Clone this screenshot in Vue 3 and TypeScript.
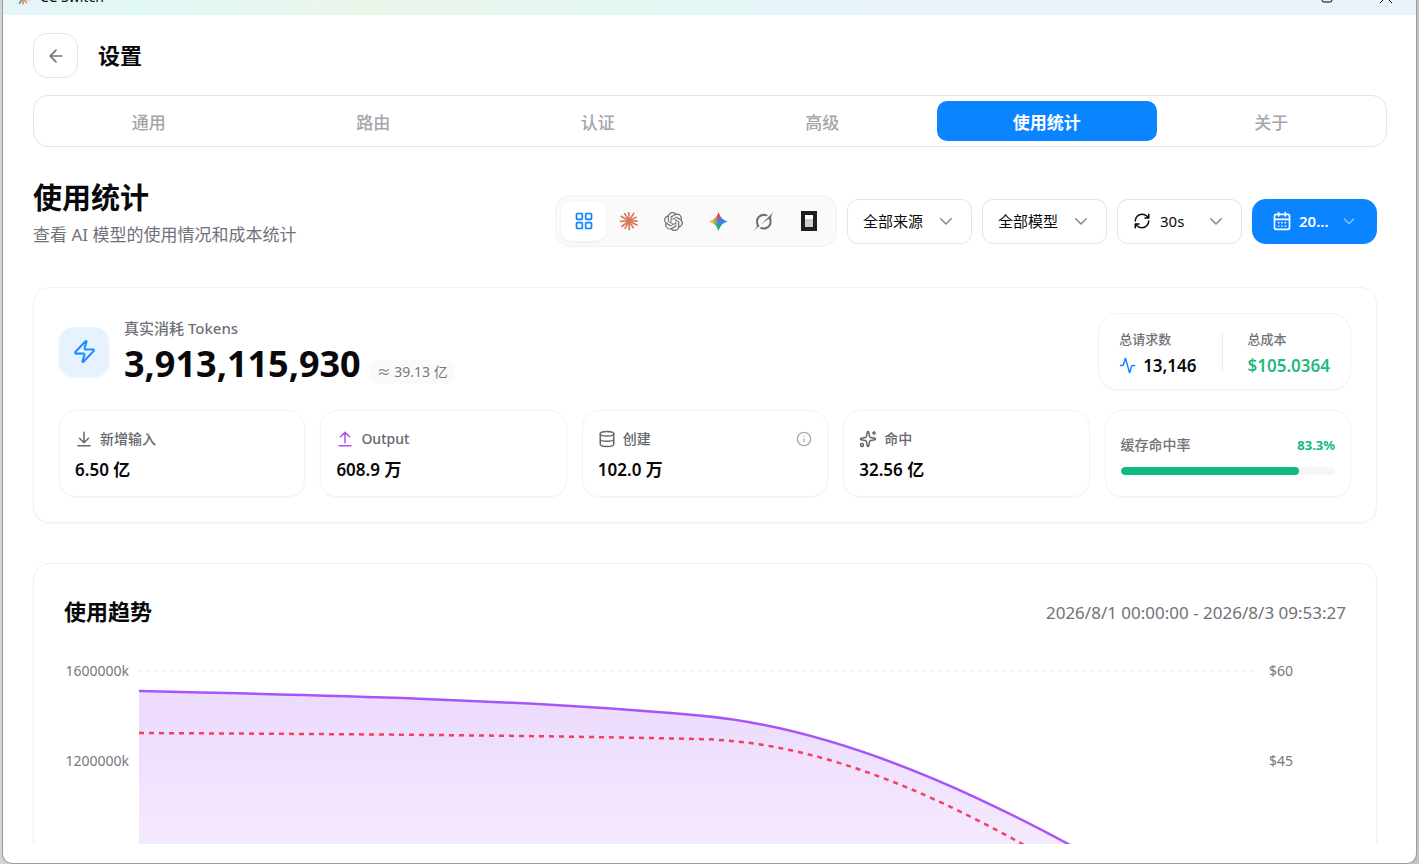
<script setup lang="ts">
import { computed, ref } from 'vue'

interface Point {
  x: number
  y: number
}

const tabs = ['通用', '路由', '认证', '高级', '使用统计', '关于']
const activeTab = ref('使用统计')

const providers = [
  { id: 'all', name: '全部' },
  { id: 'claude', name: 'Claude' },
  { id: 'openai', name: 'OpenAI' },
  { id: 'gemini', name: 'Gemini' },
  { id: 'grok', name: 'Grok' },
  { id: 'opencode', name: 'OpenCode' },
]
const activeProvider = ref('all')

const claudeRays = [
  [0, 9.6], [27, 10.4], [58, 9.4], [88, 10], [118, 9.6], [143, 10.4],
  [178, 10], [211, 10.6], [240, 10], [268, 9.8], [302, 10.4], [332, 9.6],
].map(([deg, len]) => {
  const a = (deg * Math.PI) / 180
  return { x: 12 + Math.cos(a) * len * 1.1, y: 12 + Math.sin(a) * len * 1.1 }
})

const metrics = [
  { id: 'input', label: '新增输入', value: '6.50 亿', info: false },
  { id: 'output', label: 'Output', value: '608.9 万', info: false },
  { id: 'create', label: '创建', value: '102.0 万', info: true },
  { id: 'hit', label: '命中', value: '32.56 亿', info: false },
]
const hitRate = 83.3

const tokenAxis = ['1600000k', '1200000k']
const costAxis = ['$60', '$45']

const tokenSeries: Point[] = [
  { x: 0, y: 20 },
  { x: 560, y: 44.5 },
  { x: 1120, y: 282.5 },
]
const costSeries: Point[] = [
  { x: 0, y: 62 },
  { x: 560, y: 68 },
  { x: 1120, y: 323 },
]

/** Monotone cubic curve through three points. */
function curve([a, b, c]: Point[]): string {
  const s0 = (b.y - a.y) / (b.x - a.x)
  const s1 = (c.y - b.y) / (c.x - b.x)
  const mid = 2 * Math.min(s0, s1, (s0 + s1) / 4)
  const start = (3 * s0 - mid) / 2
  const end = (3 * s1 - mid) / 2
  const d0 = (b.x - a.x) / 3
  const d1 = (c.x - b.x) / 3
  return (
    `M${a.x} ${a.y}` +
    `C${a.x + d0} ${a.y + d0 * start} ${b.x - d0} ${b.y - d0 * mid} ${b.x} ${b.y}` +
    `C${b.x + d1} ${b.y + d1 * mid} ${c.x - d1} ${c.y - d1 * end} ${c.x} ${c.y}`
  )
}

const tokenLine = computed(() => curve(tokenSeries))
const costLine = computed(() => curve(costSeries))
const tokenArea = computed(() => `${tokenLine.value}L1120 360L0 360Z`)
</script>

<template>
  <div class="desktop">
    <div class="window">
      <div class="titlebar">
        <svg class="app-icon" viewBox="0 0 24 24" aria-hidden="true">
          <g stroke-width="3" stroke-linecap="round">
            <path d="M12 12 3 14M12 12 6 21" stroke="#5b9bb0" />
            <path d="M12 12v10M12 12l6 8M12 12l10 3" stroke="#e8935a" />
            <path d="M12 12 3 7M12 12 12 2M12 12l9-5" stroke="#e8935a" />
          </g>
        </svg>
        <span class="app-name">CC Switch</span>
        <svg class="win-icon" viewBox="0 0 12 12" aria-hidden="true"><rect x="1" y="1" width="10" height="10" rx="2" /></svg>
        <svg class="win-icon close" viewBox="0 0 12 12" aria-hidden="true"><path d="M0 0l12 12M12 0 0 12" /></svg>
      </div>

      <header class="header">
        <button class="back" type="button" aria-label="返回">
          <svg class="icon" viewBox="0 0 24 24"><path d="m12 19-7-7 7-7M19 12H5" /></svg>
        </button>
        <h1>设置</h1>
      </header>

      <nav class="tabs">
        <button
          v-for="tab in tabs"
          :key="tab"
          type="button"
          :class="['tab', { active: tab === activeTab }]"
          @click="activeTab = tab"
        >{{ tab }}</button>
      </nav>

      <main class="content">
        <section class="intro">
          <div class="intro-text">
            <h2>使用统计</h2>
            <p>查看 AI 模型的使用情况和成本统计</p>
          </div>
          <div class="controls">
            <div class="segmented">
              <button
                v-for="p in providers"
                :key="p.id"
                type="button"
                :class="['segment', { active: p.id === activeProvider }]"
                :aria-label="p.name"
                @click="activeProvider = p.id"
              >
                <svg v-if="p.id === 'all'" class="icon blue" viewBox="0 0 24 24">
                  <rect x="3" y="3" width="7" height="7" rx="1" /><rect x="14" y="3" width="7" height="7" rx="1" />
                  <rect x="14" y="14" width="7" height="7" rx="1" /><rect x="3" y="14" width="7" height="7" rx="1" />
                </svg>
                <svg v-else-if="p.id === 'claude'" class="brand" viewBox="0 0 24 24">
                  <path v-for="(r, i) in claudeRays" :key="i" :d="`M12 12L${r.x} ${r.y}`" stroke="#d97757" stroke-width="2" />
                  <circle cx="12" cy="12" r="3" fill="#d97757" />
                </svg>
                <svg v-else-if="p.id === 'openai'" class="brand small gray" viewBox="0 0 24 24">
                  <path d="M22.2819 9.8211a5.9847 5.9847 0 0 0-.5157-4.9108 6.0462 6.0462 0 0 0-6.5098-2.9A6.0651 6.0651 0 0 0 4.9807 4.1818a5.9847 5.9847 0 0 0-3.9977 2.9 6.0462 6.0462 0 0 0 .7427 7.0966 5.98 5.98 0 0 0 .511 4.9107 6.051 6.051 0 0 0 6.5146 2.9001A5.9847 5.9847 0 0 0 13.2599 24a6.0557 6.0557 0 0 0 5.7718-4.2058 5.9894 5.9894 0 0 0 3.9977-2.9001 6.0557 6.0557 0 0 0-.7475-7.0729zm-9.022 12.6081a4.4755 4.4755 0 0 1-2.8764-1.0408l.1419-.0804 4.7783-2.7582a.7948.7948 0 0 0 .3927-.6813v-6.7369l2.02 1.1686a.071.071 0 0 1 .038.052v5.5826a4.504 4.504 0 0 1-4.4945 4.4944zm-9.6607-4.1254a4.4708 4.4708 0 0 1-.5346-3.0137l.142.0852 4.783 2.7582a.7712.7712 0 0 0 .7806 0l5.8428-3.3685v2.3324a.0804.0804 0 0 1-.0332.0615L9.74 19.9502a4.4992 4.4992 0 0 1-6.1408-1.6464zM2.3408 7.8956a4.485 4.485 0 0 1 2.3655-1.9728V11.6a.7664.7664 0 0 0 .3879.6765l5.8144 3.3543-2.0201 1.1685a.0757.0757 0 0 1-.071 0l-4.8303-2.7865A4.504 4.504 0 0 1 2.3408 7.872zm16.5963 3.8558L13.1038 8.364 15.1192 7.2a.0757.0757 0 0 1 .071 0l4.8303 2.7913a4.4944 4.4944 0 0 1-.6765 8.1042v-5.6772a.79.79 0 0 0-.407-.667zm2.0107-3.0231l-.142-.0852-4.7735-2.7818a.7759.7759 0 0 0-.7854 0L9.409 9.2297V6.8974a.0662.0662 0 0 1 .0284-.0615l4.8303-2.7866a4.4992 4.4992 0 0 1 6.6802 4.66zM8.3065 12.863l-2.02-1.1638a.0804.0804 0 0 1-.038-.0567V6.0742a4.4992 4.4992 0 0 1 7.3757-3.4537l-.142.0805L8.704 5.459a.7948.7948 0 0 0-.3927.6813zm1.0976-2.3654l2.602-1.4998 2.6069 1.4998v2.9994l-2.5974 1.4997-2.6067-1.4997Z" />
                </svg>
                <svg v-else-if="p.id === 'gemini'" class="brand small" viewBox="0 0 24 24">
                  <defs>
                    <linearGradient id="gem-top" x1="0" y1="0" x2="0" y2="1"><stop offset="0.25" stop-color="#f0453c" /><stop offset="0.48" stop-color="#f0453c" stop-opacity="0" /></linearGradient>
                    <linearGradient id="gem-left" x1="0" y1="0" x2="1" y2="0"><stop offset="0.2" stop-color="#f9bd10" /><stop offset="0.5" stop-color="#f9bd10" stop-opacity="0" /></linearGradient>
                    <linearGradient id="gem-bottom" x1="0" y1="1" x2="0" y2="0"><stop offset="0.22" stop-color="#08b962" /><stop offset="0.48" stop-color="#08b962" stop-opacity="0" /></linearGradient>
                  </defs>
                  <path v-for="f in ['#3186ff', 'url(#gem-bottom)', 'url(#gem-top)', 'url(#gem-left)']" :key="f" :fill="f" d="M12 0c1.500 6.300 5.700 10.500 12 12-6.300 1.500-10.500 5.700-12 12-1.500-6.300-5.700-10.500-12-12 6.300-1.500 10.500-5.700 12-12z" />
                </svg>
                <svg v-else-if="p.id === 'grok'" class="brand large gray" viewBox="0 0 24 24">
                  <path d="M9.27 15.29l7.978-5.897c.391-.29.95-.177 1.137.272.98 2.369.542 5.215-1.41 7.169-1.951 1.954-4.667 2.382-7.149 1.406l-2.711 1.257c3.889 2.661 8.611 2.003 11.562-.953 2.341-2.344 3.066-5.539 2.388-8.42l.006.007c-.983-4.232.242-5.924 2.75-9.383.06-.082.12-.164.179-.248l-3.301 3.305v-.01L9.267 15.292M7.623 16.723c-2.792-2.67-2.31-6.801.071-9.184 1.761-1.763 4.647-2.483 7.166-1.425l2.705-1.25a7.808 7.808 0 00-1.829-1A8.975 8.975 0 005.984 5.83c-2.533 2.536-3.33 6.436-1.962 9.764 1.022 2.487-.653 4.246-2.34 6.022-.599.63-1.199 1.259-1.682 1.925l7.62-6.815" />
                </svg>
                <svg v-else class="brand" viewBox="0 0 20 20">
                  <path fill="#211e1e" d="M2 0h16v20H2z" /><path fill="#fff" d="M6 4h8v4H6z" /><path fill="#cfcecd" d="M6 8h8v8H6z" />
                </svg>
              </button>
            </div>

            <label class="picker">
              <select aria-label="来源"><option>全部来源</option></select>
              <svg class="icon chevron" viewBox="0 0 24 24"><path d="m5 9 7 7 7-7" /></svg>
            </label>
            <label class="picker">
              <select aria-label="模型"><option>全部模型</option></select>
              <svg class="icon chevron" viewBox="0 0 24 24"><path d="m5 9 7 7 7-7" /></svg>
            </label>
            <label class="picker">
              <svg class="icon refresh" viewBox="0 0 24 24">
                <path d="M3 12a9 9 0 0 1 9-9 9.750 9.750 0 0 1 6.740 2.740L21 8M21 3v5h-5M21 12a9 9 0 0 1-9 9 9.750 9.750 0 0 1-6.740-2.740L3 16M8 16H3v5" />
              </svg>
              <select aria-label="刷新间隔"><option>30s</option></select>
              <svg class="icon chevron" viewBox="0 0 24 24"><path d="m5 9 7 7 7-7" /></svg>
            </label>
            <button class="date-button" type="button">
              <svg class="icon calendar" viewBox="0 0 24 24">
                <path d="M8 2v4M16 2v4M3 10h18M8 14h.01M12 14h.01M16 14h.01M8 18h.01M12 18h.01M16 18h.01" />
                <rect x="3" y="4" width="18" height="18" rx="2" />
              </svg>
              <span>20...</span>
              <svg class="icon chevron" viewBox="0 0 24 24"><path d="m5 9 7 7 7-7" /></svg>
            </button>
          </div>
        </section>

        <section class="card summary">
          <div class="summary-top">
            <div class="bolt">
              <svg class="icon" viewBox="0 0 24 24">
                <path d="M4 14a1 1 0 0 1-.78-1.630l9.900-10.200a.5.5 0 0 1 .860.460l-1.920 6.020A1 1 0 0 0 13 10h7a1 1 0 0 1 .780 1.630l-9.900 10.200a.5.5 0 0 1-.860-.460l1.920-6.020A1 1 0 0 0 11 14z" />
              </svg>
            </div>
            <div class="total">
              <div class="total-label">真实消耗 Tokens</div>
              <div class="total-line">
                <strong>3,913,115,930</strong>
                <span class="approx">≈ 39.13 亿</span>
              </div>
            </div>
            <div class="totals-box">
              <div class="totals-item">
                <span class="totals-label">总请求数</span>
                <span class="totals-value">
                  <svg class="icon blue" viewBox="0 0 24 24">
                    <path d="M22 12h-2.480a2 2 0 0 0-1.930 1.460l-2.350 8.360a.250.250 0 0 1-.480 0L9.240 2.180a.250.250 0 0 0-.480 0l-2.350 8.360A2 2 0 0 1 4.490 12H2" />
                  </svg>
                  13,146
                </span>
              </div>
              <div class="totals-item">
                <span class="totals-label">总成本</span>
                <span class="totals-value green">$105.0364</span>
              </div>
            </div>
          </div>

          <div class="metrics">
            <div v-for="m in metrics" :key="m.id" class="metric">
              <div class="metric-head">
                <svg v-if="m.id === 'input'" class="icon" viewBox="0 0 24 24"><path d="M12 17V3M6 11l6 6 6-6M20 21H4" /></svg>
                <svg v-else-if="m.id === 'output'" class="icon purple" viewBox="0 0 24 24"><path d="m18 9-6-6-6 6M12 3v14M4 21h16" /></svg>
                <svg v-else-if="m.id === 'create'" class="icon" viewBox="0 0 24 24">
                  <ellipse cx="12" cy="5" rx="9" ry="3" /><path d="M3 5v14a9 3 0 0 0 18 0V5M3 12a9 3 0 0 0 18 0" />
                </svg>
                <svg v-else class="icon" viewBox="0 0 24 24">
                  <path d="M11.017 2.814a1 1 0 0 1 1.966 0l1.051 5.558a2 2 0 0 0 1.594 1.594l5.558 1.051a1 1 0 0 1 0 1.966l-5.558 1.051a2 2 0 0 0-1.594 1.594l-1.051 5.558a1 1 0 0 1-1.966 0l-1.051-5.558a2 2 0 0 0-1.594-1.594l-5.558-1.051a1 1 0 0 1 0-1.966l5.558-1.051a2 2 0 0 0 1.594-1.594zM20 2v4M22 4h-4" />
                  <circle cx="4" cy="20" r="2" />
                </svg>
                <span>{{ m.label }}</span>
                <svg v-if="m.info" class="icon info" viewBox="0 0 24 24"><circle cx="12" cy="12" r="10" /><path d="M12 16v-4M12 8h.01" /></svg>
              </div>
              <div class="metric-value">{{ m.value }}</div>
            </div>
            <div class="metric rate">
              <div class="rate-head">
                <span>缓存命中率</span>
                <strong>{{ hitRate }}%</strong>
              </div>
              <div class="rate-track" role="progressbar" aria-label="缓存命中率" :aria-valuenow="hitRate">
                <div class="rate-fill" :style="{ width: hitRate + '%' }"></div>
              </div>
            </div>
          </div>
        </section>

        <section class="card trend">
          <div class="trend-head">
            <h3>使用趋势</h3>
            <span>2026/8/1 00:00:00 - 2026/8/3 09:53:27</span>
          </div>
          <div class="chart">
            <ul class="axis left"><li v-for="t in tokenAxis" :key="t">{{ t }}</li></ul>
            <svg class="plot" viewBox="0 0 1120 360" preserveAspectRatio="none" role="img" aria-label="使用趋势">
              <defs>
                <linearGradient id="token-fill" x1="0" y1="0" x2="0" y2="1">
                  <stop offset="0.05" stop-color="#a855f7" stop-opacity="0.21" />
                  <stop offset="0.95" stop-color="#a855f7" stop-opacity="0.02" />
                </linearGradient>
              </defs>
              <line class="grid" x1="0" x2="1120" y1="0" y2="0" />
              <path :d="tokenArea" fill="url(#token-fill)" />
              <path :d="tokenLine" class="line tokens" />
              <path :d="costLine" class="line cost" />
            </svg>
            <ul class="axis right"><li v-for="c in costAxis" :key="c">{{ c }}</li></ul>
          </div>
        </section>
      </main>
    </div>
  </div>
</template>

<style>
body {
  overflow: hidden;
}
</style>

<style scoped>
* {
  box-sizing: border-box;
}

h1,
h2,
h3,
p,
ul {
  margin: 0;
  padding: 0;
}

button,
select {
  font: inherit;
  color: inherit;
  cursor: pointer;
}

.desktop {
  height: 100vh;
  padding: 0 2px 0 2px;
  background: linear-gradient(90deg, #d4d4d4 50%, #c4c4c4 50%);
  font-family: "Noto Sans", "Noto Sans CJK SC", sans-serif;
  color: #09090b;
}

.window {
  display: flex;
  flex-direction: column;
  height: 100%;
  padding-bottom: 19px;
  overflow: hidden;
  background: #fff;
  border: 1px solid #9b9b9b;
  border-top: 0;
  border-radius: 0 0 10px 10px;
}

.icon {
  flex: none;
  width: 16px;
  height: 16px;
  fill: none;
  stroke: currentColor;
  stroke-width: 2;
  stroke-linecap: round;
  stroke-linejoin: round;
}

.blue {
  color: #0a84ff;
}

.purple {
  color: #a855f7;
}

.titlebar {
  flex: none;
  display: flex;
  align-items: flex-end;
  height: 15px;
  padding: 0 24px 10px 13px;
  overflow: hidden;
  background: linear-gradient(90deg, #e6f5f8, #e0f8f6 9%, #ebf6ea 26%, #e2f7f4 48%, #e7f4fa 58%, #ebf3f8 85%);
}

.app-icon {
  flex: none;
  width: 14px;
  height: 14px;
  margin-right: 10px;
}

.app-name {
  flex: 1;
  font-size: 14px;
  line-height: 16px;
}

.win-icon {
  flex: none;
  width: 12px;
  height: 12px;
  margin-right: 47px;
  margin-bottom: 2px;
  fill: none;
  stroke: #000;
  stroke-width: 1;
}

.win-icon.close {
  margin-right: 0;
}

.header {
  flex: none;
  display: flex;
  align-items: center;
  gap: 20px;
  padding: 18px 30px 17px;
}

.back {
  display: grid;
  place-items: center;
  width: 45px;
  height: 45px;
  color: #71717a;
  background: #fff;
  border: 1px solid #e4e4e7;
  border-radius: 14px;
}

.back .icon {
  width: 20px;
  height: 20px;
}

h1,
h3 {
  padding-bottom: 2px;
  font-size: 22px;
  line-height: 34px;
  font-weight: 600;
}

.tabs {
  flex: none;
  display: grid;
  grid-template-columns: repeat(6, 1fr);
  gap: 5px;
  margin: 0 29px 0 30px;
  padding: 5px;
  border: 1px solid #e4e4e7;
  border-radius: 15px;
}

.tab {
  height: 40px;
  padding: 0;
  font-size: 17px;
  font-weight: 500;
  color: #a5a5aa;
  background: none;
  border: 0;
  border-radius: 10px;
}

.tab.active {
  font-weight: 600;
  color: #fff;
  background: #0a84ff;
}

.content {
  flex: 1;
  min-height: 0;
  display: flex;
  flex-direction: column;
  gap: 40px;
  padding: 33px 39px 0 30px;
  overflow: hidden;
}

.intro {
  flex: none;
  display: flex;
  align-items: flex-end;
  justify-content: space-between;
}

.intro-text {
  display: flex;
  flex-direction: column;
  gap: 7px;
}

h2 {
  font-size: 29px;
  line-height: 36px;
  font-weight: 700;
}

.intro-text p {
  font-size: 17px;
  line-height: 24px;
  color: #71717a;
}

.controls {
  display: flex;
  align-items: center;
  gap: 10px;
}

.segmented {
  display: flex;
  padding: 5px;
  background: #fafafa;
  border: 1px solid #f1f1f2;
  border-radius: 15px;
}

.segment {
  display: grid;
  place-items: center;
  width: 45px;
  height: 40px;
  padding: 0;
  background: none;
  border: 0;
  border-radius: 11px;
}

.segment.active {
  background: #fff;
  box-shadow: 0 1px 3px rgba(0, 0, 0, 0.06);
}

.segment .icon,
.brand {
  width: 20px;
  height: 20px;
}

.brand {
  fill: none;
}

.brand.small {
  width: 19px;
  height: 19px;
}

.brand.large {
  width: 21px;
  height: 21px;
}

.brand.gray {
  fill: #71717a;
}

.picker {
  display: flex;
  align-items: center;
  width: 125px;
  height: 45px;
  padding: 0 16px 0 15px;
  font-size: 15px;
  background: #fff;
  border: 1px solid #e4e4e7;
  border-radius: 11px;
}

.picker select {
  flex: 1;
  min-width: 0;
  padding: 0;
  background: none;
  border: 0;
  appearance: none;
  outline: 0;
}

.chevron {
  width: 18px;
  height: 18px;
  stroke-width: 2;
  color: #85858a;
}

.refresh {
  width: 18px;
  height: 18px;
  margin-right: 9px;
}

.date-button {
  display: flex;
  align-items: center;
  width: 125px;
  height: 45px;
  padding: 0 20px;
  font-size: 15px;
  font-weight: 600;
  color: #fff;
  background: #0a84ff;
  border: 0;
  border-radius: 14px;
}

.date-button span {
  flex: 1;
  text-align: left;
  padding-left: 7px;
}

.calendar {
  width: 20px;
  height: 20px;
}

.date-button .chevron {
  width: 16px;
  height: 16px;
  color: #8fc6ff;
}

.card {
  flex: none;
  border: 1px solid #f0f0f1;
  border-radius: 17px;
  box-shadow: 0 1px 2px rgba(0, 0, 0, 0.04);
}

.summary {
  display: flex;
  flex-direction: column;
  gap: 20px;
  padding: 25px;
}

.summary-top {
  display: flex;
  align-items: center;
}

.bolt {
  display: grid;
  place-items: center;
  width: 50px;
  height: 50px;
  margin-right: 15px;
  color: #1a8cff;
  background: #e7f2ff;
  border-radius: 15px;
  box-shadow: 0 1px 2px rgba(0, 0, 0, 0.05);
}

.bolt .icon {
  width: 25px;
  height: 25px;
}

.total {
  flex: 1;
  display: flex;
  flex-direction: column;
  gap: 2px;
}

.total-label {
  font-size: 15px;
  line-height: 22px;
  font-weight: 500;
  color: #71717a;
}

.total-line {
  display: flex;
  align-items: flex-end;
  gap: 9px;
}

.total-line strong {
  font-size: 36px;
  line-height: 46px;
  font-weight: 700;
}

.approx {
  margin-bottom: 3px;
  padding: 0 7px;
  font-size: 14px;
  line-height: 24px;
  color: #77777d;
  background: #fafafa;
  border-radius: 9px;
}

.totals-box {
  display: flex;
  padding: 15px 20px 12px;
  border: 1px solid #f3f3f4;
  border-radius: 20px;
  box-shadow: 0 1px 2px rgba(0, 0, 0, 0.04);
}

.totals-item {
  display: flex;
  flex-direction: column;
  gap: 5px;
}

.totals-item + .totals-item {
  position: relative;
  margin-left: 25px;
  padding-left: 26px;
}

.totals-item + .totals-item::before {
  content: "";
  position: absolute;
  left: 0;
  top: 3px;
  bottom: 5px;
  width: 1px;
  background: #ececee;
}

.totals-label {
  font-size: 13px;
  line-height: 20px;
  font-weight: 500;
  color: #71717a;
}

.totals-value {
  display: flex;
  align-items: center;
  gap: 7px;
  font-size: 17px;
  line-height: 23px;
  font-weight: 600;
}

.totals-value .icon {
  width: 17px;
  height: 17px;
}

.green {
  color: #1fb980;
}

.metrics {
  display: grid;
  grid-template-columns: repeat(5, 1fr);
  gap: 15px;
}

.metric {
  display: flex;
  flex-direction: column;
  gap: 7px;
  min-height: 87px;
  padding: 15px 15px 14px;
  border: 1px solid #f3f3f4;
  border-radius: 17px;
  box-shadow: 0 1px 2px rgba(0, 0, 0, 0.04);
}

.metric-head {
  display: flex;
  align-items: center;
  gap: 7px;
  font-size: 14px;
  line-height: 25px;
  font-weight: 500;
  color: #66666d;
}

.metric-head .icon {
  width: 18px;
  height: 18px;
}

.metric-head .info {
  width: 16px;
  height: 16px;
  margin-left: auto;
  color: #a9a9ae;
}

.metric-value {
  font-size: 17px;
  line-height: 24px;
  font-weight: 600;
}

.rate {
  justify-content: center;
  gap: 11px;
}

.rate-head {
  display: flex;
  justify-content: space-between;
  font-size: 14px;
  line-height: 22px;
  font-weight: 500;
  color: #71717a;
}

.rate-head strong {
  font-size: 13px;
  font-weight: 700;
  color: #10b981;
}

.rate-track {
  height: 8px;
  overflow: hidden;
  background: #f6f6f7;
  border-radius: 4px;
}

.rate-fill {
  height: 100%;
  background: #10b981;
  border-radius: 4px;
}

.trend {
  padding: 30px;
}

.trend-head {
  display: flex;
  align-items: center;
  justify-content: space-between;
  margin-bottom: 41px;
}

.trend-head span {
  font-size: 17px;
  color: #71717a;
}

.chart {
  display: grid;
  grid-template-columns: 75px 1fr 87px;
}

.axis {
  margin-top: -10px;
  list-style: none;
  font-size: 14px;
  line-height: 20px;
  color: #77777d;
}

.axis li {
  height: 90px;
}

.axis.left {
  padding-right: 10px;
  text-align: right;
}

.axis.right {
  padding-left: 10px;
}

.plot {
  display: block;
  width: 100%;
  height: 360px;
  overflow: visible;
}

.grid {
  stroke: #ececee;
  stroke-dasharray: 4 4;
}

.line {
  fill: none;
  stroke-width: 2.5;
  vector-effect: non-scaling-stroke;
}

.tokens {
  stroke: #a855f7;
}

.cost {
  stroke: #f43f5e;
  stroke-dasharray: 5 5;
}
</style>
